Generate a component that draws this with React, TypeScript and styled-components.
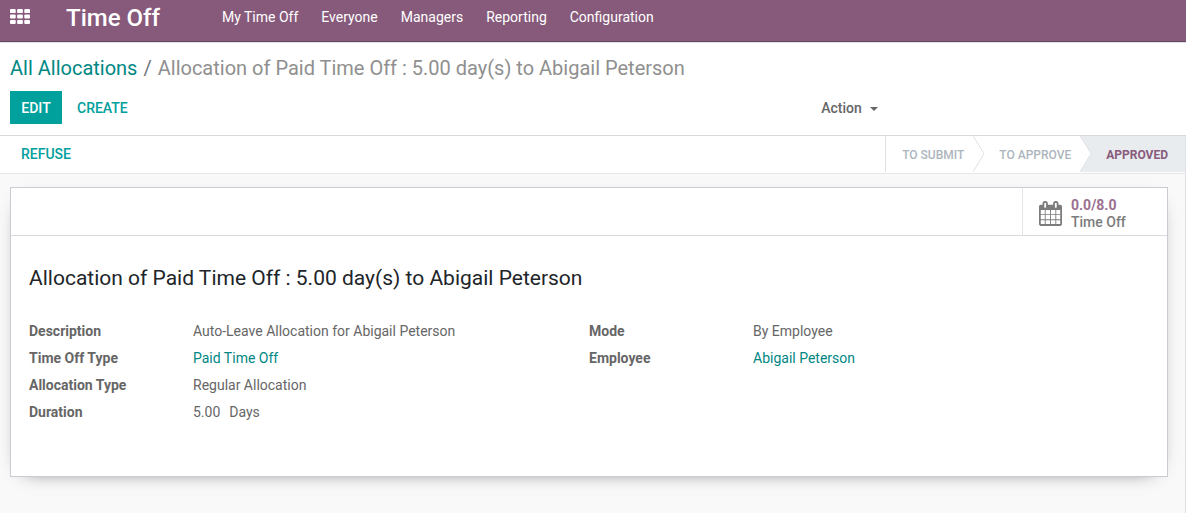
import React from "react";
import styled, { createGlobalStyle } from "styled-components";

const GlobalStyle = createGlobalStyle`
  *, *::before, *::after { box-sizing: border-box; }
  html, body, #root { min-height: 100vh; }
  body {
    margin: 0;
    background: #fff;
    color: #666;
    font: 14px/21px Roboto, "Liberation Sans", sans-serif;
  }
  #root { display: flex; }
  a { text-decoration: none; }
  button { font: inherit; border: 0; background: none; cursor: pointer; }
`;

const Page = styled.div`
  flex: 1;
  min-width: 0;
  display: flex;
  flex-direction: column;
`;

const Navbar = styled.header`
  display: flex;
  align-items: flex-start;
  height: 42px;
  background: #875a7b;
  border-bottom: 1px solid #68465f;
  color: #fff;
`;

const AppsButton = styled.button`
  display: flex;
  padding: 9px 10px;
  color: #fff;
`;

const Brand = styled.a`
  margin-left: 26px;
  color: #fff;
  font-size: 24px;
  line-height: 36px;
  font-weight: 500;
`;

const Menu = styled.nav`
  display: flex;
  gap: 23px;
  margin-left: 62px;
`;

const MenuLink = styled.a`
  color: #fff;
  line-height: 34px;
`;

const ControlPanel = styled.section`
  padding: 10px 10px 11px;
  border-top: 1px solid #dee2e6;
  border-bottom: 1px solid #d8dadd;
`;

const Breadcrumb = styled.ol`
  display: flex;
  margin: 0;
  padding: 0;
  list-style: none;
  font-size: 20px;
  line-height: 30px;
  color: #8f8f8f;

  li + li::before {
    content: "/";
    padding: 0 6px;
    color: #6c757d;
  }
`;

const Link = styled.a`
  color: #008784;
`;

const Toolbar = styled.div`
  display: grid;
  grid-template-columns: 16fr 7fr;
  align-items: center;
  margin-top: 8px;
`;

const ButtonGroup = styled.div`
  display: flex;
  gap: 4px;
`;

const Button = styled.button<{ $primary?: boolean }>`
  min-width: 52px;
  height: 33px;
  padding: 1px 11px 0;
  font-weight: 500;
  text-transform: uppercase;
  color: ${(p) => (p.$primary ? "#fff" : "#00a09d")};
  background: ${(p) => (p.$primary ? "#00a09d" : "transparent")};
`;

const ActionButton = styled.button`
  display: flex;
  align-items: center;
  gap: 8px;
  padding: 2px 0 0;
  color: #666;
  font-weight: 500;
`;

const Caret = styled.span`
  border: 4px solid transparent;
  border-top-color: currentColor;
  border-bottom: 0;
`;

const FormView = styled.main`
  flex: 1;
  background: #f9f9f9;
  border-right: 1px solid #dee2e6;
`;

const StatusBar = styled.div`
  display: flex;
  align-items: flex-start;
  justify-content: space-between;
  height: 38px;
  padding-left: 10px;
  background: #fff;
  border-bottom: 1px solid #e3e5e8;
`;

const StatusButtons = styled(ButtonGroup)`
  padding-top: 1px;
`;

const Stages = styled.ol`
  display: flex;
  height: 36px;
  margin: 0;
  padding: 0;
  list-style: none;
  border-left: 1px solid #dee2e6;
`;

const Stage = styled.li<{ $current?: boolean }>`
  display: flex;
  color: ${(p) => (p.$current ? "#875a7b" : "#adb5bd")};
  background: ${(p) => (p.$current ? "#e9ecef" : "#fff")};
  font-weight: ${(p) => (p.$current ? 700 : 500)};

  &:first-child { padding-left: 2px; }
  &:last-child { padding-right: 8px; }
`;

const StageButton = styled.button`
  padding: 2px 9px 0 14px;
  color: inherit;
  font-size: 12px;
  text-transform: uppercase;
`;

const Sheet = styled.article`
  margin: 13px 17px 36px 10px;
  background: #fff;
  border: 1px solid #c9ccd2;
  box-shadow: 0 5px 20px -15px #000;
`;

const ButtonBox = styled.div`
  display: flex;
  justify-content: flex-end;
  border-bottom: 1px solid #d8dade;
`;

const StatButton = styled.button`
  display: flex;
  align-items: center;
  gap: 9px;
  width: 145px;
  height: 47px;
  padding: 4px 0 0 16px;
  border-left: 1px solid #e3e5e8;
  color: #7c7c7c;
  font-weight: 500;
  line-height: 17px;
  text-align: left;
`;

const StatText = styled.span`
  display: flex;
  flex-direction: column;
`;

const StatValue = styled.span`
  color: #9b6f90;
  font-weight: 700;
`;

const SheetBody = styled.div`
  padding: 26px 18px 50px;
`;

const Title = styled.h1`
  margin: 0 0 24px;
  color: #212529;
  font-size: 21px;
  line-height: 32px;
  font-weight: 400;
`;

const Groups = styled.div`
  display: grid;
  grid-template-columns: 1fr 1fr;
  align-items: start;
`;

const Fields = styled.dl`
  display: grid;
  grid-template-columns: 164px 1fr;
  grid-auto-rows: 27px;
  align-items: center;
  margin: 0;
`;

const FieldName = styled.dt`
  font-weight: 700;
`;

const FieldValue = styled.dd`
  display: flex;
  gap: 9px;
  margin: 0;
`;

const AppsIcon = () => (
  <svg width="20" height="15" viewBox="0 0 1792 1408" preserveAspectRatio="none" fill="currentColor" aria-hidden="true">
    {[0, 512, 1024].map((y) =>
      [0, 640, 1280].map((x) => (
        <rect key={`${x}-${y}`} x={x} y={y} width="512" height="384" rx="90" />
      ))
    )}
  </svg>
);

const CalendarIcon = () => (
  <svg width="23" height="25" viewBox="64 0 1664 1792" fill="currentColor" aria-hidden="true">
    <path d="M192 1664h288v-288h-288v288zm352 0h320v-288h-320v288zm-352-352h288v-320h-288v320zm352 0h320v-320h-320v320zm-352-384h288v-288h-288v288zm736 736h320v-288h-320v288zm-384-736h320v-288h-320v288zm768 736h288v-288h-288v288zm-384-352h320v-320h-320v320zm-352-864v-288q0-13-9.500-22.500t-22.500-9.500h-64q-13 0-22.500 9.500t-9.500 22.500v288q0 13 9.500 22.500t22.500 9.500h64q13 0 22.500-9.500t9.500-22.500zm736 864h288v-320h-288v320zm-384-384h320v-288h-320v288zm384 0h288v-288h-288v288zm32-480v-288q0-13-9.500-22.500t-22.500-9.500h-64q-13 0-22.500 9.500t-9.500 22.500v288q0 13 9.500 22.500t22.500 9.500h64q13 0 22.500-9.500t9.500-22.500zm384-64v1280q0 52-38 90t-90 38h-1408q-52 0-90-38t-38-90v-1280q0-52 38-90t90-38h128v-96q0-66 47-113t113-47h64q66 0 113 47t47 113v96h384v-96q0-66 47-113t113-47h64q66 0 113 47t47 113v96h128q52 0 90 38t38 90z" />
  </svg>
);

const StageArrow = () => (
  <svg width="12" height="36" viewBox="0 0 12 36" aria-hidden="true">
    <path d="M0 0L11 17.500L0 36Z" fill="#fff" />
    <path d="M0 0L11 17.500L0 36" fill="none" stroke="#dee2e6" />
  </svg>
);

const menu = ["My Time Off", "Everyone", "Managers", "Reporting", "Configuration"];
const stages = ["To Submit", "To Approve", "Approved"];

export default function App() {
  return (
    <>
      <GlobalStyle />
      <Page>
        <Navbar>
          <AppsButton aria-label="Applications">
            <AppsIcon />
          </AppsButton>
          <Brand href="#">Time Off</Brand>
          <Menu>
            {menu.map((item) => (
              <MenuLink href="#" key={item}>{item}</MenuLink>
            ))}
          </Menu>
        </Navbar>

        <ControlPanel>
          <Breadcrumb>
            <li><Link href="#">All Allocations</Link></li>
            <li>Allocation of Paid Time Off : 5.00 day(s) to Abigail Peterson</li>
          </Breadcrumb>
          <Toolbar>
            <ButtonGroup>
              <Button $primary>Edit</Button>
              <Button>Create</Button>
            </ButtonGroup>
            <ActionButton aria-haspopup="menu">
              Action <Caret />
            </ActionButton>
          </Toolbar>
        </ControlPanel>

        <FormView>
          <StatusBar>
            <StatusButtons>
              <Button>Refuse</Button>
            </StatusButtons>
            <Stages>
              {stages.map((stage, i) => (
                <Stage key={stage} $current={stage === "Approved"}>
                  {i > 0 && <StageArrow />}
                  <StageButton>{stage}</StageButton>
                </Stage>
              ))}
            </Stages>
          </StatusBar>

          <Sheet>
            <ButtonBox>
              <StatButton>
                <CalendarIcon />
                <StatText>
                  <StatValue>0.0/8.0</StatValue>
                  <span>Time Off</span>
                </StatText>
              </StatButton>
            </ButtonBox>
            <SheetBody>
              <Title>Allocation of Paid Time Off : 5.00 day(s) to Abigail Peterson</Title>
              <Groups>
                <Fields>
                  <FieldName>Description</FieldName>
                  <FieldValue>Auto-Leave Allocation for Abigail Peterson</FieldValue>
                  <FieldName>Time Off Type</FieldName>
                  <FieldValue><Link href="#">Paid Time Off</Link></FieldValue>
                  <FieldName>Allocation Type</FieldName>
                  <FieldValue>Regular Allocation</FieldValue>
                  <FieldName>Duration</FieldName>
                  <FieldValue><span>5.00</span><span>Days</span></FieldValue>
                </Fields>
                <Fields>
                  <FieldName>Mode</FieldName>
                  <FieldValue>By Employee</FieldValue>
                  <FieldName>Employee</FieldName>
                  <FieldValue><Link href="#">Abigail Peterson</Link></FieldValue>
                </Fields>
              </Groups>
            </SheetBody>
          </Sheet>
        </FormView>
      </Page>
    </>
  );
}
